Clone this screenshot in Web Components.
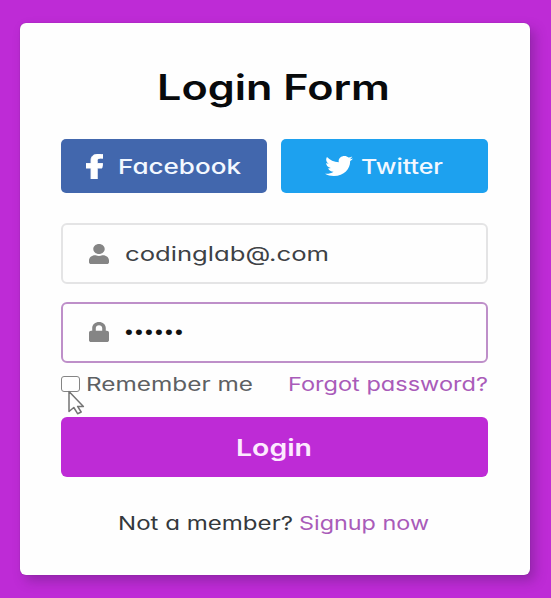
<!DOCTYPE html>
<html lang="en">
<head>
<meta charset="utf-8">
<title>Login Form</title>
<style>
html, body { margin: 0; height: 100%; }
body { background: #be2bd6; overflow: hidden; font-family: "Inter", "Liberation Sans", sans-serif; font-feature-settings: "cv11"; color: #0d1013; }
</style>
</head>
<body>
<login-page></login-page>
<script>
const define = (name, html, extra) => {
  const tpl = document.createElement('template');
  tpl.innerHTML = html;
  customElements.define(name, class extends HTMLElement {
    connectedCallback() {
      if (this.shadowRoot) return;
      this.attachShadow({ mode: 'open' }).append(tpl.content.cloneNode(true));
      if (extra) extra(this, this.shadowRoot);
    }
  });
};

// A single line of text, stretched horizontally to the width given in "w".
define('wide-text', `
<style>
:host { display: block; flex: none; white-space: nowrap; line-height: 1.2; }
span { display: inline-block; transform-origin: 0 50%; vertical-align: top; }
</style><span><slot></slot></span>`, (el, root) => {
  const w = +el.getAttribute('w');
  const span = root.querySelector('span');
  el.style.width = w + 'px';
  span.style.transform = `scaleX(${w / span.getBoundingClientRect().width})`;
});

define('social-button', `
<style>
:host { display: flex; align-items: center; justify-content: center; height: 54px; border-radius: 5px; color: #f3f8ff; font-size: 20.5px; font-weight: 500; box-sizing: border-box; }
:host([kind=facebook]) { background: #4267ad; flex: 0 0 206px; gap: 15px; padding-right: 1px; }
:host([kind=twitter]) { background: #1da1ef; flex: 0 0 207px; gap: 8px; padding-right: 2px; }
::slotted(wide-text) { padding-top: 2px; }
</style><slot name="icon"></slot><slot></slot>`);

define('text-field', `
<style>
:host { display: flex; align-items: center; height: 61px; box-sizing: border-box; border: 2px solid #e4e4e5; border-radius: 6px; padding-left: 26px; gap: 16px; font-size: 20px; color: #3d4145; }
:host([focused]) { border-color: #be8fc9; color: #111; }
</style><slot name="icon"></slot><slot></slot>`);

define('check-box', `
<style>
:host { display: block; box-sizing: border-box; width: 19px; height: 16px; border: 1.5px solid #858585; border-radius: 3px; background: #fff; position: relative; }
svg { position: absolute; left: 5px; top: 13px; display: block; }
</style>
<svg width="20" height="26" viewBox="0 0 20 26"><path d="M2 1.500V21.500l4.800-4 3.800 6.200 3.600-1.700-3.600-5.600h5.800z" fill="#fff" stroke="#747474" stroke-width="1.500" stroke-linejoin="round"/></svg>`);

define('submit-button', `
<style>
:host { display: flex; align-items: center; justify-content: center; height: 60px; border-radius: 6px; background: #be2bd6; color: #fdeaff; font-size: 23px; font-weight: 600; }
::slotted(wide-text) { padding-top: 4px; margin-right: 1px; }
</style><slot></slot>`);

define('login-card', `
<style>
:host { display: flex; flex-direction: column; box-sizing: border-box; height: 551.5px; padding: 43px 42px 0 41.5px; background: #fefefe; border-radius: 6px; box-shadow: 5px 6px 12px rgba(70,25,90,.34), 0 0 1px rgba(70,25,90,.6); }
</style><slot></slot>`);

define('login-page', `
<style>
:host { display: block; padding: 23px 21px 0 19.5px; }
svg { display: block; flex: none; }
.title { align-self: center; font-size: 35px; font-weight: 600; color: #080a0c; margin-right: 2px; }
.social { display: flex; gap: 14px; margin: 31px 0 30px; }
.second { margin-top: 17.5px; }
.options { display: flex; align-items: center; height: 24px; margin: 9.5px 0 21px; font-size: 18.7px; }
.options wide-text { padding-top: 2px; }
.options .me { margin-left: 6px; color: #5d6063; }
.options .forgot { margin-left: auto; }
.link { color: #a95bb9; }
.signup { display: flex; gap: 6px; justify-content: center; margin-top: 36px; font-size: 18.7px; color: #34383c; padding-right: 2px; }
.dots { font-family: "Liberation Sans", sans-serif; font-size: 20px; letter-spacing: 2px; }
</style>
<login-card>
  <wide-text class="title" w="233">Login Form</wide-text>
  <div class="social">
    <social-button kind="facebook">
      <svg slot="icon" width="17" height="25" viewBox="22.9 0 274.2 512" preserveAspectRatio="none"><path fill="#fff" stroke="#fff" stroke-width="16" d="M279.14 288l14.22-92.66h-88.91v-60.13c0-25.35 12.42-50.06 52.24-50.06h40.42V6.26S260.43 0 225.36 0c-73.22 0-121.08 44.38-121.08 124.72v70.62H22.89V288h81.39v224h100.17V288z"/></svg>
      <wide-text w="123">Facebook</wide-text>
    </social-button>
    <social-button kind="twitter">
      <svg slot="icon" width="28" height="20" viewBox="0 48 512 416" preserveAspectRatio="none"><path fill="#fff" d="M459.37 151.716c.325 4.548.325 9.097.325 13.645 0 138.72-105.583 298.558-298.558 298.558-59.452 0-114.68-17.219-161.137-47.106 8.447.974 16.568 1.299 25.34 1.299 49.055 0 94.213-16.568 130.274-44.832-46.132-.975-84.792-31.188-98.112-72.772 6.498.974 12.995 1.624 19.818 1.624 9.421 0 18.843-1.3 27.614-3.573-48.081-9.747-84.143-51.98-84.143-102.985v-1.299c13.969 7.797 30.214 12.67 47.431 13.319-28.264-18.843-46.781-51.005-46.781-87.391 0-19.492 5.197-37.36 14.294-52.954 51.655 63.675 129.3 105.258 216.365 109.807-1.624-7.797-2.599-15.918-2.599-24.04 0-57.828 46.782-104.934 104.934-104.934 30.213 0 57.502 12.67 76.67 33.137 23.715-4.548 46.456-13.32 66.599-25.34-7.798 24.366-24.366 44.833-46.132 57.827 21.117-2.273 41.584-8.122 60.426-16.243-14.292 20.791-32.161 39.308-52.628 54.253z"/></svg>
      <wide-text w="82">Twitter</wide-text>
    </social-button>
  </div>
  <text-field>
    <svg slot="icon" width="20" height="20" viewBox="0 0 448 512" preserveAspectRatio="none"><path fill="#858585" d="M224 256c70.700 0 128-57.300 128-128S294.700 0 224 0 96 57.300 96 128s57.300 128 128 128zm89.600 32h-16.700c-22.200 10.200-46.900 16-72.900 16s-50.600-5.800-72.900-16h-16.700C60.200 288 0 348.200 0 422.400V464c0 26.500 21.500 48 48 48h352c26.500 0 48-21.500 48-48v-41.600c0-74.200-60.200-134.400-134.400-134.400z"/></svg>
    <wide-text w="204">codinglab@.com</wide-text>
  </text-field>
  <text-field class="second" focused>
    <svg slot="icon" width="20" height="20" viewBox="0 0 448 512" preserveAspectRatio="none"><path fill="#858585" d="M400 224h-24v-72C376 68.200 307.800 0 224 0S72 68.200 72 152v72H48c-26.500 0-48 21.500-48 48v192c0 26.500 21.500 48 48 48h352c26.500 0 48-21.500 48-48V272c0-26.500-21.500-48-48-48zm-104 0H152v-72c0-39.700 32.300-72 72-72s72 32.300 72 72v72z"/></svg>
    <wide-text class="dots" w="60">••••••</wide-text>
  </text-field>
  <div class="options">
    <check-box></check-box>
    <wide-text class="me" w="167">Remember me</wide-text>
    <wide-text class="link forgot" w="200">Forgot password?</wide-text>
  </div>
  <submit-button><wide-text w="76">Login</wide-text></submit-button>
  <div class="signup">
    <wide-text w="175">Not a member?</wide-text>
    <wide-text class="link" w="130">Signup now</wide-text>
  </div>
</login-card>`);
</script>
</body>
</html>
